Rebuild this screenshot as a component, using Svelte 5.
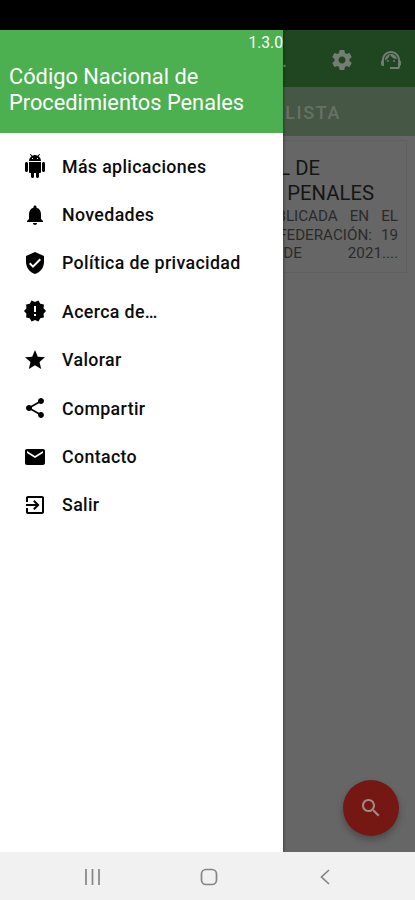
<script>
  const items = [
    { label: 'Más aplicaciones', d: 'M6 18c0 .55.45 1 1 1h1v3.500c0 .83.67 1.500 1.500 1.500s1.500-.67 1.500-1.500V19h2v3.500c0 .83.67 1.500 1.500 1.500s1.500-.67 1.500-1.500V19h1c.55 0 1-.45 1-1V8H6v10zM3.500 8C2.670 8 2 8.670 2 9.500v7c0 .83.67 1.500 1.500 1.500S5 17.330 5 16.500v-7C5 8.670 4.330 8 3.500 8zm17 0c-.83 0-1.500.67-1.500 1.500v7c0 .83.67 1.500 1.500 1.500s1.500-.67 1.500-1.500v-7c0-.83-.67-1.500-1.500-1.500zm-4.970-5.840l1.300-1.300c.2-.2.2-.51 0-.71-.2-.2-.51-.2-.71 0l-1.480 1.480C13.850 1.230 12.950 1 12 1c-.96 0-1.860.23-2.660.63L7.850.15c-.2-.2-.51-.2-.71 0-.2.2-.2.51 0 .71l1.310 1.310C6.970 3.260 6 5.010 6 7h12c0-1.990-.97-3.750-2.470-4.840zM10 5H9V4h1v1zm5 0h-1V4h1v1z' },
    { label: 'Novedades', d: 'M12 22c1.100 0 2-.9 2-2h-4c0 1.100.89 2 2 2zm6-6v-5c0-3.070-1.640-5.640-4.500-6.320V4c0-.83-.67-1.500-1.500-1.500s-1.500.67-1.500 1.500v.68C7.630 5.360 6 7.920 6 11v5l-2 2v1h16v-1l-2-2z' },
    { label: 'Política de privacidad', d: 'M12 1L3 5v6c0 5.550 3.840 10.740 9 12 5.160-1.260 9-6.450 9-12V5l-9-4zm-2 16l-4-4 1.410-1.410L10 14.170l6.590-6.590L18 9l-8 8z' },
    { label: 'Acerca de…', d: 'M23 12l-2.440-2.780.34-3.680-3.610-.82-1.890-3.180L12 3 8.600 1.540 6.710 4.720l-3.610.81.34 3.680L1 12l2.440 2.780-.34 3.690 3.610.82 1.890 3.180L12 21l3.400 1.460 1.890-3.180 3.610-.82-.34-3.680L23 12zm-10 5h-2v-2h2v2zm0-4h-2V7h2v6z' },
    { label: 'Valorar', d: 'M12 17.270L18.180 21l-1.640-7.030L22 9.240l-7.190-.61L12 2 9.190 8.630 2 9.240l5.460 4.730L5.820 21z' },
    { label: 'Compartir', d: 'M18 16.080c-.76 0-1.440.3-1.960.77L8.910 12.700c.05-.23.09-.46.09-.7s-.04-.47-.09-.7l7.050-4.110c.54.5 1.250.81 2.040.81 1.660 0 3-1.340 3-3s-1.340-3-3-3-3 1.340-3 3c0 .24.04.47.09.7L8.040 9.810C7.500 9.310 6.790 9 6 9c-1.660 0-3 1.340-3 3s1.340 3 3 3c.79 0 1.500-.31 2.040-.81l7.120 4.160c-.05.21-.08.43-.08.65 0 1.610 1.310 2.920 2.920 2.920s2.920-1.310 2.920-2.920-1.310-2.920-2.920-2.920z' },
    { label: 'Contacto', d: 'M20 4H4c-1.100 0-1.990.9-1.990 2L2 18c0 1.100.9 2 2 2h16c1.100 0 2-.9 2-2V6c0-1.100-.9-2-2-2zm0 4l-8 5-8-5V6l8 5 8-5v2z' },
    { label: 'Salir', d: 'M10.090 15.590L11.500 17l5-5-5-5-1.410 1.410L12.670 11H3v2h9.670l-2.580 2.590zM19 3H5c-1.110 0-2 .9-2 2v4h2V5h14v14H5v-4H3v4c0 1.100.89 2 2 2h14c1.100 0 2-.9 2-2V5c0-1.100-.9-2-2-2z' }
  ];
</script>

<div class="phone">
  <div class="status"></div>
  <main>
    <div class="bar">
      <span class="dots">.</span>
      <svg class="gear" viewBox="0 0 24 24"><path d="M19.430 12.980c.04-.32.07-.64.07-.98s-.03-.66-.07-.98l2.110-1.650c.19-.15.24-.42.12-.64l-2-3.460c-.12-.22-.39-.3-.61-.22l-2.490 1c-.52-.4-1.080-.73-1.690-.98l-.38-2.650C14.460 2.180 14.250 2 14 2h-4c-.25 0-.46.18-.49.42l-.38 2.650c-.61.25-1.170.59-1.690.98l-2.490-1c-.23-.09-.49 0-.61.22l-2 3.460c-.13.22-.07.49.12.64l2.110 1.650c-.04.32-.07.65-.07.98s.03.66.07.98l-2.110 1.650c-.19.15-.24.42-.12.64l2 3.460c.12.22.39.3.61.22l2.490-1c.52.4 1.080.73 1.690.98l.38 2.650c.03.24.24.42.49.42h4c.25 0 .46-.18.49-.42l.38-2.650c.61-.25 1.170-.59 1.690-.98l2.490 1c.23.09.49 0 .61-.22l2-3.460c.12-.22.07-.49-.12-.64l-2.110-1.650zM12 15.500c-1.930 0-3.500-1.570-3.500-3.500s1.570-3.500 3.500-3.500 3.500 1.570 3.500 3.500-1.570 3.500-3.500 3.500z" /></svg>
      <svg class="agent" viewBox="0 0 24 24"><path d="M21 12.220C21 6.730 16.740 3 12 3c-4.690 0-9 3.650-9 9.280-.6.34-1 .98-1 1.720v2c0 1.100.9 2 2 2h1v-6.100c0-3.870 3.130-7 7-7s7 3.130 7 7V19h-8v2h8c1.100 0 2-.9 2-2v-1.220c.59-.31 1-.92 1-1.640v-2.300c0-.7-.41-1.310-1-1.620z" /><circle cx="9" cy="13" r="1" /><circle cx="15" cy="13" r="1" /><path d="M18 11.030C17.520 8.180 15.040 6 12.050 6c-3.030 0-6.290 2.510-6.030 6.450 2.470-1.010 4.330-3.210 4.860-5.890 1.310 2.630 4 4.440 7.120 4.470z" /></svg>
    </div>
    <div class="tab">LISTA</div>
    <article>
      <h2><span class="t1">L DE</span><span class="t2">PENALES</span></h2>
      <p class="l1"><span>BLICADA</span><span>EN</span><span>EL</span></p>
      <p class="l2"><span>FEDERACIÓN:</span><span>19</span></p>
      <p class="l3"><span>DE</span><span>2021....</span></p>
    </article>
    <button class="fab" aria-label="Buscar"><svg viewBox="0 0 24 24"><path d="M15.500 14h-.79l-.28-.27C15.410 12.590 16 11.110 16 9.500 16 5.910 13.090 3 9.500 3S3 5.910 3 9.500 5.910 16 9.500 16c1.610 0 3.090-.59 4.230-1.570l.27.28v.79l5 4.990L20.490 19l-4.990-5zm-6 0C7.010 14 5 11.990 5 9.500S7.010 5 9.500 5 14 7.010 14 9.500 11.990 14 9.500 14z" /></svg></button>
  </main>
  <aside>
    <header>
      <span class="version">1.3.0</span>
      <h1>Código Nacional de<br />Procedimientos Penales</h1>
    </header>
    <nav>
      {#each items as item}
        <a href="#top">
          <svg viewBox="0 0 24 24"><path d={item.d} /></svg>
          <span>{item.label}</span>
        </a>
      {/each}
    </nav>
  </aside>
  <footer>
    <svg viewBox="0 0 18 18"><path d="M2 1v16M8.500 1v16M15 1v16" /></svg>
    <svg viewBox="0 0 18 18"><rect x="1.500" y="1.500" width="15" height="15" rx="4.500" /></svg>
    <svg viewBox="0 0 18 18"><path d="M13 2L5.500 9l7.500 7" /></svg>
  </footer>
</div>

<style>
  .phone { position: relative; width: 415px; height: 900px; overflow: hidden; display: flex; flex-direction: column; background: #000; font-family: Roboto, sans-serif; }
  .status { height: 30px; flex: none; }
  main { height: 822px; flex: none; background: #666; overflow: hidden; display: flex; flex-direction: column; }
  .bar { height: 57px; flex: none; box-sizing: border-box; background: #1f4621; display: flex; align-items: center; justify-content: flex-end; padding: 2px 12px 0 0; color: #7b827b; }
  .bar svg { width: 24px; height: 24px; fill: #747d73; }
  .dots { font-size: 20px; margin-right: 43px; }
  .gear { margin-right: 25px; }
  .tab { height: 49px; flex: none; background: #465745; color: #677266; font-size: 18px; font-weight: 500; letter-spacing: 1.6px; line-height: 51px; text-align: right; padding-right: 74px; }
  article { width: 391px; height: 133px; margin: 4px 0 0 16px; box-sizing: border-box; border: 1px solid #5f5f5f; border-left: 0; padding: 15px 8px 0 0; color: #151515; }
  h2 { margin: 0; font-size: 20.300px; font-weight: 400; line-height: 25px; text-align: right; display: flex; flex-direction: column; }
  .t1 { padding-right: 78px; }
  .t2 { padding-right: 24px; }
  p { margin: 0; height: 18.500px; line-height: 20px; display: flex; justify-content: flex-end; font-size: 15.200px; color: #2b2b2b; }
  .l1 { gap: 12px; }
  .l2 { gap: 9px; }
  .l3 { gap: 46px; }
  .fab { align-self: flex-end; margin: auto 16px 16px 0; width: 56px; height: 56px; border: 0; border-radius: 50%; background: #751713; display: flex; align-items: center; justify-content: center; padding: 0; box-shadow: 0 4px 7px #0004; }
  .fab svg { width: 24px; height: 24px; fill: #a58a88; }
  aside { position: absolute; left: 0; top: 30px; width: 283px; height: 822px; background: #fff; box-shadow: 0 0 3px #0009; clip-path: inset(0 -6px 0 0); }
  header { height: 103px; box-sizing: border-box; background: #4caf50; color: #fff; display: flex; flex-direction: column; padding-top: 4px; }
  .version { align-self: flex-end; font-size: 15.600px; line-height: 18px; }
  h1 { margin: 12px 0 0 9px; font-size: 21.800px; line-height: 26px; font-weight: 400; }
  nav { padding-top: 9px; display: flex; flex-direction: column; }
  a { height: 48.400px; display: flex; align-items: center; color: #0c0c0c; text-decoration: none; padding-left: 23px; font-size: 17.800px; font-weight: 500; letter-spacing: .36px; }
  a svg { width: 24px; height: 24px; margin-right: 15px; fill: #000; }
  footer { height: 48px; flex: none; box-sizing: border-box; background: #f1f1f1; display: flex; align-items: center; padding: 2px 0 0 84px; gap: 98px; }
  footer svg { width: 18px; height: 18px; fill: none; stroke: #858585; stroke-width: 1.700; }
</style>
